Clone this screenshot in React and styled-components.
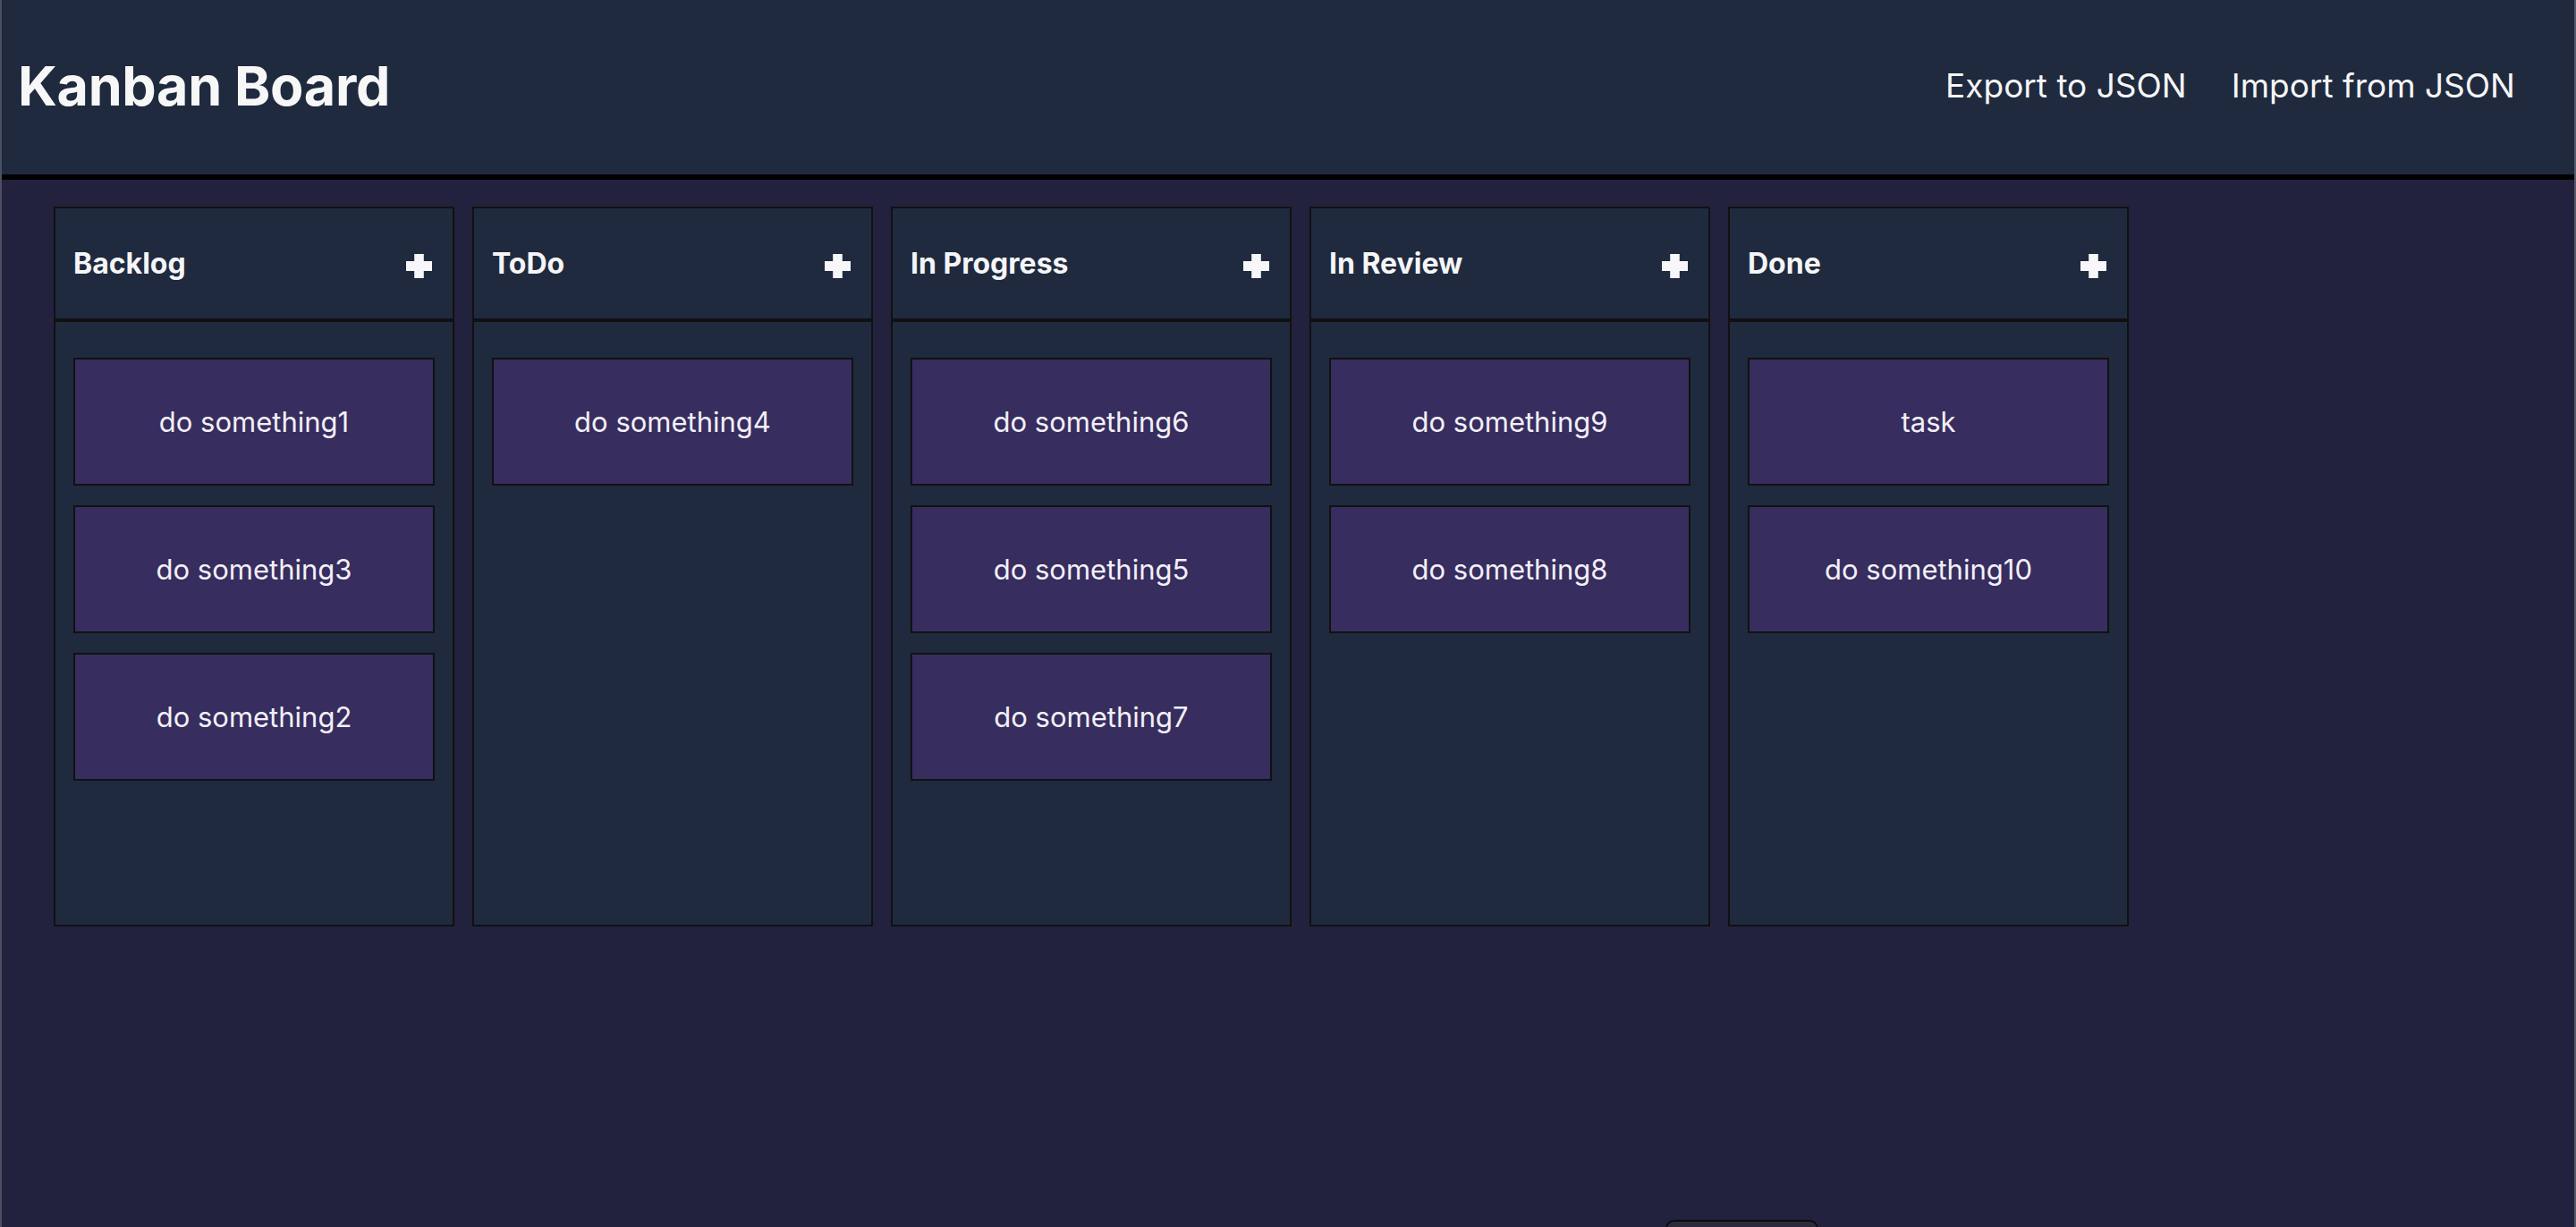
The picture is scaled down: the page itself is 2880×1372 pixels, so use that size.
import React from 'react';
import styled, { createGlobalStyle } from 'styled-components';

const GlobalStyle = createGlobalStyle`
  html, body {
    margin: 0;
    padding: 0;
    height: 100%;
    overflow: hidden;
    background: #22223e;
  }
  body {
    font-family: Inter, "Noto Sans", "Liberation Sans", sans-serif;
    color: #f5f5f7;
  }
  * { box-sizing: border-box; }
`;

const Page = styled.div`
  min-height: 100vh;
  background: #22223e;
  border-left: 2px solid #4b4f62;
  border-right: 2px solid #565b6b;
`;

const Header = styled.header`
  height: 201px;
  display: flex;
  align-items: center;
  justify-content: space-between;
  padding: 0 66px 4px 18px;
  background: #1f2a3e;
  border-bottom: 6px solid #000;
`;

const Title = styled.h1`
  margin: 0;
  font-size: 61px;
  font-weight: 700;
  letter-spacing: -0.3px;
  color: #f7f7f8;
`;

const Actions = styled.div`
  display: flex;
  gap: 50px;
`;

const HeaderButton = styled.button`
  background: none;
  border: none;
  padding: 0;
  font-family: inherit;
  font-size: 37px;
  color: #f5f5f7;
  cursor: pointer;
`;

const Board = styled.main`
  display: flex;
  gap: 20px;
  padding: 30px 0 0 58px;
`;

const Column = styled.section`
  width: 448px;
  display: flex;
  flex-direction: column;
`;

const ColumnHeader = styled.div`
  height: 127px;
  display: flex;
  align-items: center;
  justify-content: space-between;
  padding: 0 23px 0 20px;
  background: #1f2a3e;
  border: 2px solid #111;
`;

const ColumnTitle = styled.h3`
  margin: 0;
  font-size: 32px;
  font-weight: 700;
  color: #f5f5f7;
`;

const AddButton = styled.button`
  background: none;
  border: none;
  padding: 0;
  margin-top: 6px;
  display: flex;
  cursor: pointer;
`;

const ColumnBody = styled.div`
  height: 678px;
  display: flex;
  flex-direction: column;
  gap: 22px;
  padding: 40px 20px;
  background: #1f2a3e;
  border: 2px solid #111;
`;

const Card = styled.div`
  height: 143px;
  display: flex;
  align-items: center;
  justify-content: center;
  background: #372d5e;
  border: 2px solid #111;
  font-size: 31px;
  color: #f2f0f7;
`;

const Toast = styled.div`
  position: fixed;
  left: 1862px;
  top: 1364px;
  width: 171px;
  height: 40px;
  background: #2d2b3b;
  border: 2px solid #0a0a0f;
  border-radius: 10px;
`;

const PlusIcon = () => (
  <svg width="29" height="27" viewBox="0 0 29 27">
    <rect x="9.2" y="0" width="10.6" height="27" fill="#f7f7f9" />
    <rect x="0" y="8" width="29" height="11" fill="#f7f7f9" />
  </svg>
);

const columns = [
  { title: 'Backlog', tasks: ['do something1', 'do something3', 'do something2'] },
  { title: 'ToDo', tasks: ['do something4'] },
  { title: 'In Progress', tasks: ['do something6', 'do something5', 'do something7'] },
  { title: 'In Review', tasks: ['do something9', 'do something8'] },
  { title: 'Done', tasks: ['task', 'do something10'] },
];

const App = () => (
  <>
    <GlobalStyle />
    <Page>
      <Header>
        <Title>Kanban Board</Title>
        <Actions>
          <HeaderButton>Export to JSON</HeaderButton>
          <HeaderButton>Import from JSON</HeaderButton>
        </Actions>
      </Header>
      <Board>
        {columns.map((col) => (
          <Column key={col.title}>
            <ColumnHeader>
              <ColumnTitle>{col.title}</ColumnTitle>
              <AddButton aria-label="Add task">
                <PlusIcon />
              </AddButton>
            </ColumnHeader>
            <ColumnBody>
              {col.tasks.map((task) => (
                <Card key={task}>{task}</Card>
              ))}
            </ColumnBody>
          </Column>
        ))}
      </Board>
      <Toast />
    </Page>
  </>
);

export default App;
